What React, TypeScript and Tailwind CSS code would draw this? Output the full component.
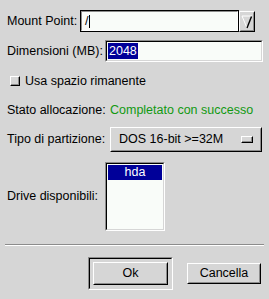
import React from 'react';

// GTK 1.x style "partition" dialog
const font = { fontFamily: '"Liberation Sans", Arial, sans-serif' };

const Raised: React.FC<{ className?: string; children?: React.ReactNode }> = ({ className = '', children }) => (
  <div className={`border border-t-white border-l-white border-b-black border-r-black ${className}`}>
    <div className="w-full h-full border border-t-[#d6d6d6] border-l-[#d6d6d6] border-b-[#8c8c8c] border-r-[#8c8c8c] flex items-center justify-center">
      {children}
    </div>
  </div>
);

const Sunken: React.FC<{ className?: string; inner?: string; children?: React.ReactNode }> = ({
  className = '',
  inner = '',
  children,
}) => (
  <div className={`border border-t-[#8c8c8c] border-l-[#8c8c8c] border-b-white border-r-white ${className}`}>
    <div className={`w-full h-full border border-t-black border-l-black border-b-[#d6d6d6] border-r-[#d6d6d6] ${inner}`}>
      {children}
    </div>
  </div>
);

export default function App() {
  return (
    <div className="w-[269px] h-[299px] bg-[#d6d6d6] text-[12.5px] text-black leading-none flex flex-col" style={font}>
      {/* Mount point */}
      <div className="flex items-center mt-[10px] h-[22px]">
        <span className="w-[80px] pl-[7px]">Mount Point:</span>
        <div className="w-[159px] h-[22px] border border-black">
          <div className="w-full h-full border border-t-[#8c8c8c] border-l-[#8c8c8c] border-b-white border-r-white bg-[#f9fcf9] flex items-center pl-[3px]">
            <span>/</span>
            <span className="w-px h-[13px] bg-black ml-px" />
          </div>
        </div>
        <Raised className="w-[16px] h-[21px]">
          <svg width="12" height="15" viewBox="0 0 12 15">
            <polygon points="1,2 11,2 6,14" fill="#d6d6d6" />
            <path d="M1 2 L11 2 M1 2 L6 14" stroke="#ffffff" strokeWidth="1" fill="none" />
            <path d="M10.5 2.5 L6 14" stroke="#000" strokeWidth="1.4" fill="none" />
          </svg>
        </Raised>
      </div>

      {/* Dimensioni */}
      <div className="flex items-center mt-[8px] h-[22px]">
        <span className="w-[105px] pl-[7px]">Dimensioni (MB):</span>
        <Sunken className="w-[158px] h-[22px]" inner="bg-[#f9fcf9] flex items-center pl-px">
          <span className="bg-[#000099] text-white px-px py-[2px]">2048</span>
        </Sunken>
      </div>

      {/* Checkbox */}
      <div className="flex items-center mt-[12px] h-[14px] pl-[10px]">
        <div className="w-[10px] h-[10px] border border-t-white border-l-white border-b-black border-r-black">
          <div className="w-full h-full border-b border-r border-[#8c8c8c]" />
        </div>
        <span className="ml-[5px]">Usa spazio rimanente</span>
      </div>

      {/* Stato */}
      <div className="flex items-center mt-[15px] h-[14px]">
        <span className="w-[110px] pl-[7px]">Stato allocazione:</span>
        <span className="text-[#119911]">Completato con successo</span>
      </div>

      {/* Tipo */}
      <div className="flex items-center mt-[10px] h-[25px]">
        <span className="w-[110px] pl-[7px]">Tipo di partizione:</span>
        <div className="w-[152px] h-[25px] border border-t-white border-l-white border-b-black border-r-black">
          <div className="w-full h-full border border-t-[#d6d6d6] border-l-[#d6d6d6] border-b-[#8c8c8c] border-r-[#8c8c8c] flex items-center pl-[7px] pr-[7px]">
            <span className="flex-1">DOS 16-bit &gt;=32M</span>
            <div className="w-[12px] h-[7px] border border-t-white border-l-white border-b-black border-r-black">
              <div className="w-full h-full border-b border-r border-[#8c8c8c]" />
            </div>
          </div>
        </div>
      </div>

      {/* Drive list */}
      <div className="flex items-center mt-[10px] h-[69px]">
        <span className="w-[105px] pl-[7px]">Drive disponibili:</span>
        <Sunken className="w-[60px] h-[69px]" inner="bg-[#f9fcf9] p-px">
          <div className="h-[15px] bg-[#000099] text-white flex items-center justify-center">hda</div>
        </Sunken>
      </div>

      {/* Separator */}
      <div className="mt-[13px] mx-[5px] border-t border-t-[#8c8c8c] border-b border-b-white" />

      {/* Buttons */}
      <div className="flex items-center mt-[11px] h-[33px]">
        <div className="ml-[88px] w-[85px] h-[33px] border border-t-[#8c8c8c] border-l-[#8c8c8c] border-b-white border-r-white">
          <div className="w-full h-full border border-t-black border-l-black border-b-[#d6d6d6] border-r-[#d6d6d6] p-[3px]">
            <Raised className="w-full h-full">
              <span>Ok</span>
            </Raised>
          </div>
        </div>
        <Raised className="ml-[14px] w-[74px] h-[21px]">
          <span>Cancella</span>
        </Raised>
      </div>
    </div>
  );
}
